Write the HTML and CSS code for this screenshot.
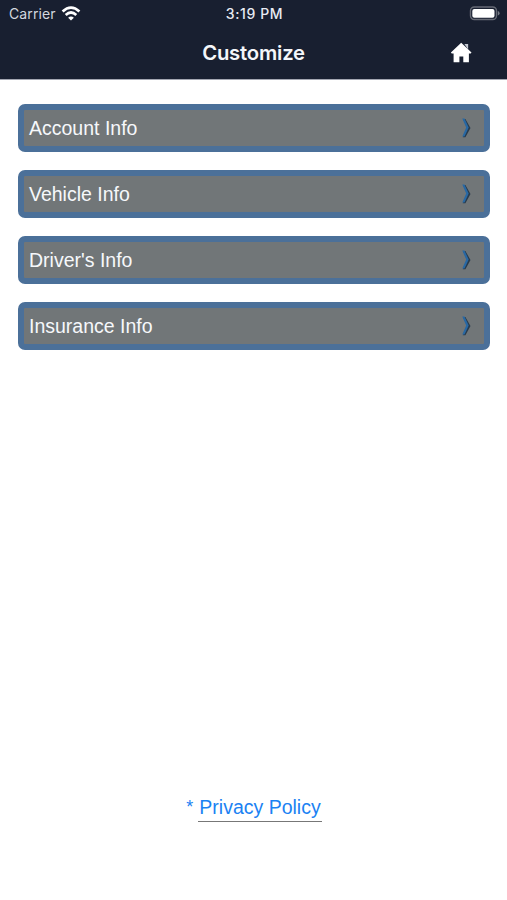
FILE: index.html
```html
<!DOCTYPE html>
<html lang="en">
<head>
<meta charset="utf-8">
<title>Customize</title>
<link rel="stylesheet" href="styles.css">
</head>
<body>
<header class="header">
  <div class="status">
    <div class="carrier"><span class="carrier-name">Carrier</span>
      <svg class="wifi" width="20" height="16" viewBox="0 0 20 16" fill="none" stroke="#fff" stroke-width="2.7"><path d="M1.6 5.6Q10-2.2 18.4 5.6"/><path d="M4.7 8.9Q10 4.1 15.3 8.9"/><path d="M10 14.6L7.1 11.7Q10 9.3 12.9 11.7Z" fill="#fff" stroke="none"/></svg>
    </div>
    <span class="time">3:19 PM</span>
    <svg class="battery" width="31" height="15" viewBox="0 0 31 15"><rect x="1.5" y="1" width="26" height="12.5" rx="3.8" fill="none" stroke="#666a75" stroke-width="1.4"/><rect x="3.3" y="2.9" width="22.2" height="8.8" rx="2" fill="#fff"/><path d="M28.8 5Q30.6 5.5 30.6 7.3T28.8 9.6Z" fill="#777b85"/></svg>
  </div>
  <div class="titlebar">
    <h1 class="title">Customize</h1>
    <svg class="home" width="22" height="22" viewBox="0 0 22 22" fill="#fff"><path d="M11.2 .8L21.5 10.6L20.7 11.4H18.9V20.2H13.3V14.4H9.4V20.2H3.6V11.4H1.7L.9 10.6Z"/><path d="M14.4 1.9H18.1V7.6Z" fill="#c5c9d2"/></svg>
  </div>
</header>
<main class="content">
  <nav class="menu">
    <a class="item"><span class="label">Account Info</span><svg class="chevron" width="12" height="22" viewBox="0 0 12 22"><path d="M2 2H4.4L9.5 11L4.4 20.2H1.8L6.2 11Z" fill="#293b4c"/><path d="M1.3 1.6H3.5L7.7 10.6L3.5 19.5H1.3L5.2 10.6Z" fill="#2868a4"/></svg></a>
    <a class="item"><span class="label">Vehicle Info</span><svg class="chevron" width="12" height="22" viewBox="0 0 12 22"><path d="M2 2H4.4L9.5 11L4.4 20.2H1.8L6.2 11Z" fill="#293b4c"/><path d="M1.3 1.6H3.5L7.7 10.6L3.5 19.5H1.3L5.2 10.6Z" fill="#2868a4"/></svg></a>
    <a class="item"><span class="label">Driver's Info</span><svg class="chevron" width="12" height="22" viewBox="0 0 12 22"><path d="M2 2H4.4L9.5 11L4.4 20.2H1.8L6.2 11Z" fill="#293b4c"/><path d="M1.3 1.6H3.5L7.7 10.6L3.5 19.5H1.3L5.2 10.6Z" fill="#2868a4"/></svg></a>
    <a class="item"><span class="label">Insurance Info</span><svg class="chevron" width="12" height="22" viewBox="0 0 12 22"><path d="M2 2H4.4L9.5 11L4.4 20.2H1.8L6.2 11Z" fill="#293b4c"/><path d="M1.3 1.6H3.5L7.7 10.6L3.5 19.5H1.3L5.2 10.6Z" fill="#2868a4"/></svg></a>
  </nav>
  <footer class="footer"><span class="star">*</span><a class="privacy">Privacy Policy</a></footer>
</main>
</body>
</html>
```
FILE: styles.css
```css
* { box-sizing: border-box; }
body {
  margin: 0;
  height: 900px;
  display: flex;
  flex-direction: column;
  background: #fff;
  font-family: "Liberation Sans", Arial, sans-serif;
}
.header {
  height: 80px;
  background: #181f30;
  border-bottom: 1px solid #a3a6b1;
  color: #fff;
  font-family: Inter, sans-serif;
}
.status {
  height: 27px;
  display: grid;
  grid-template-columns: 1fr auto 1fr;
  align-items: center;
  padding: 0 7px 0 9px;
}
.carrier { display: flex; align-items: center; gap: 5px; color: #d3d7df; }
.carrier-name { font-size: 14px; line-height: 27px; letter-spacing: .1px; }
.time {
  font-size: 14px;
  font-weight: 500;
  letter-spacing: .6px;
  line-height: 27px;
  color: #e8ebf3;
}
.battery { justify-self: end; }
.titlebar {
  height: 51px;
  display: grid;
  grid-template-columns: 1fr auto 1fr;
  align-items: center;
}
.title {
  grid-column: 2;
  margin: 0;
  font-size: 20.3px;
  font-weight: 600;
  letter-spacing: -.2px;
  line-height: 51px;
  color: #f4f6fa;
}
.home { justify-self: end; margin-right: 35px; }
.content {
  flex: 1;
  display: flex;
  flex-direction: column;
  justify-content: space-between;
  padding: 24px 17px 78px 18px;
}
.menu { display: flex; flex-direction: column; gap: 18px; }
.item {
  height: 48px;
  display: flex;
  align-items: center;
  justify-content: space-between;
  border: 6px solid #4b7099;
  border-radius: 7px;
  background: #717678;
  padding: 0 11px 0 5px;
  color: #f6f8fb;
}
.label { font-size: 19.5px; line-height: 36px; white-space: nowrap; }
.footer {
  display: flex;
  justify-content: center;
  align-items: flex-start;
  gap: 5px;
  color: #1b82f3;
  font-size: 19.5px;
  line-height: 27px;
}
.star { font-size: 18px; }
.privacy { border-bottom: 1px solid #777; padding: 0 1px; }
```
